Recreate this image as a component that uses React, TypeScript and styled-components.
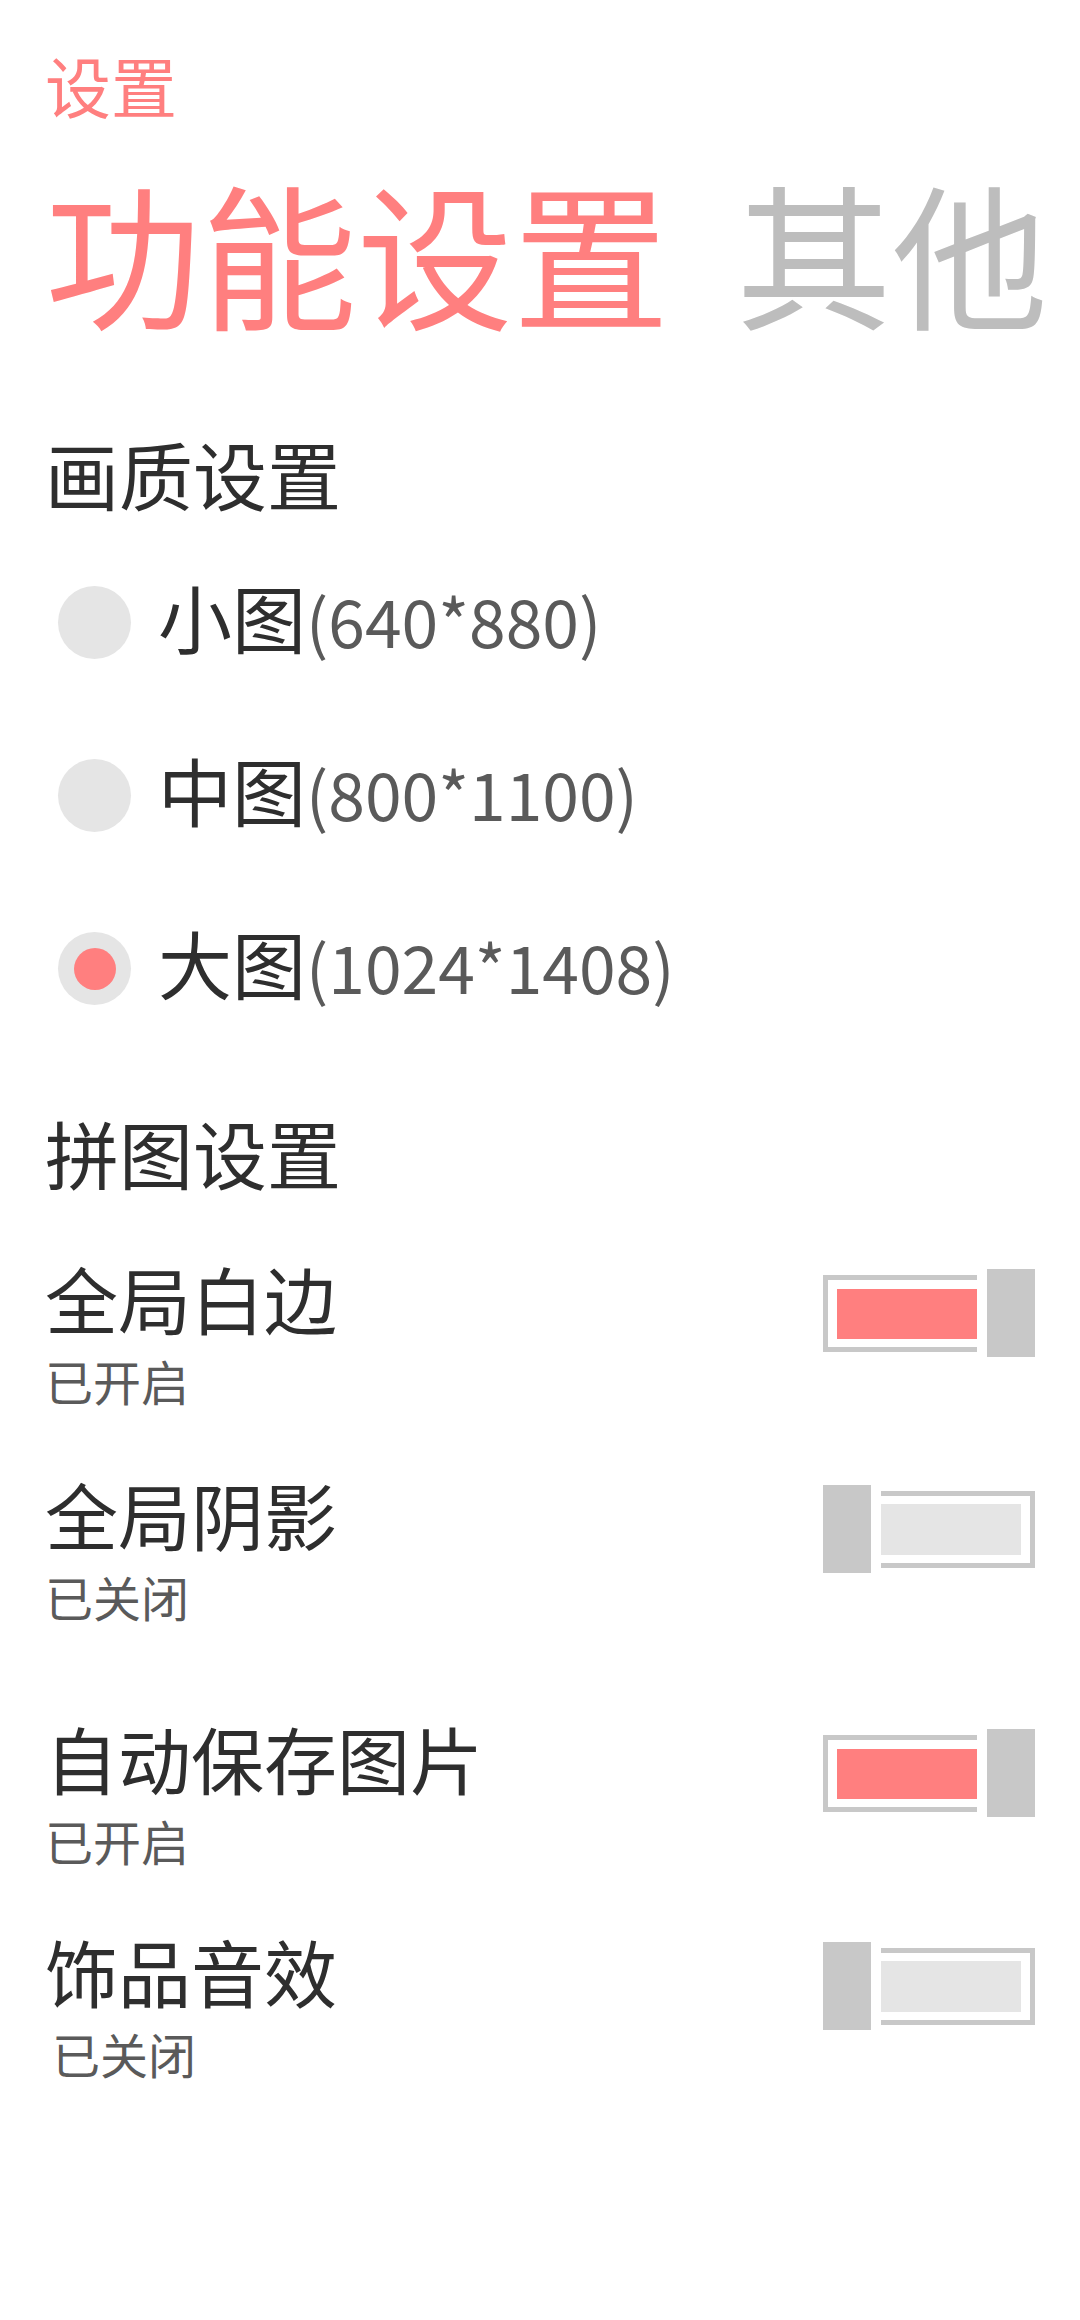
import React from "react";
import styled, { createGlobalStyle } from "styled-components";

const GlobalStyle = createGlobalStyle`
  html, body { margin: 0; padding: 0; background: #ffffff; }
  body { font-family: "Noto Sans CJK SC", "Noto Sans", sans-serif; }
`;

const PINK = "#ff7f7f";
const DARK = "#2e2e2e";
const SUB = "#5a5a5a";
const GRAY = "#c8c8c8";
const LIGHT = "#e5e5e5";

const Page = styled.div`
  width: 1080px;
  min-height: 2320px;
  box-sizing: border-box;
  padding: 51px 45px 0 45px;
  display: flex;
  flex-direction: column;
  background: #fff;
  overflow: hidden;
`;

const SmallTitle = styled.div`
  font-size: 66px;
  line-height: 66px;
  color: ${PINK};
`;

const Tabs = styled.div`
  margin-top: 55px;
  display: flex;
  align-items: baseline;
  white-space: nowrap;
`;

const Tab = styled.div<{ $active?: boolean }>`
  flex-shrink: 0;
  font-size: 156px;
  line-height: 156px;
  color: ${(p) => (p.$active ? PINK : "#bdbdbd")};
  & + & { margin-left: 67px; }
`;

const SectionTitle = styled.div<{ $mt: number }>`
  margin-top: ${(p) => p.$mt}px;
  font-size: 74px;
  line-height: 74px;
  color: ${DARK};
`;

const RadioList = styled.div`
  margin-top: 26px;
  display: flex;
  flex-direction: column;
`;

const RadioRow = styled.div`
  height: 173px;
  display: flex;
  align-items: center;
  padding-left: 13px;
`;

const RadioCircle = styled.div`
  width: 73px;
  height: 73px;
  border-radius: 50%;
  background: ${LIGHT};
  display: flex;
  align-items: center;
  justify-content: center;
  flex-shrink: 0;
`;

const RadioDot = styled.div`
  width: 42px;
  height: 42px;
  border-radius: 50%;
  background: ${PINK};
`;

const RadioLabel = styled.div`
  margin-left: 27px;
  padding-bottom: 10px;
  font-size: 74px;
  line-height: 74px;
  color: ${DARK};
  display: flex;
  align-items: baseline;
  white-space: nowrap;
`;

const Dim = styled.span`
  font-size: 66px;
  color: ${SUB};
`;

const ToggleRow = styled.div<{ $mt: number }>`
  margin-top: ${(p) => p.$mt}px;
  display: flex;
  justify-content: space-between;
  align-items: flex-start;
`;

const RowText = styled.div`
  display: flex;
  flex-direction: column;
`;

const RowTitle = styled.div`
  font-size: 73px;
  line-height: 74px;
  color: ${DARK};
`;

const RowSub = styled.div<{ $indent?: number }>`
  margin-top: 22px;
  margin-left: ${(p) => p.$indent ?? 0}px;
  font-size: 48px;
  line-height: 48px;
  color: ${SUB};
`;

const Toggle = styled.div<{ $on: boolean }>`
  margin-top: 9px;
  display: flex;
  flex-direction: ${(p) => (p.$on ? "row" : "row-reverse")};
  align-items: center;
  gap: 10px;
`;

const Thumb = styled.div`
  width: 48px;
  height: 88px;
  background: ${GRAY};
`;

const Track = styled.div<{ $on: boolean }>`
  width: 154px;
  height: 77px;
  box-sizing: border-box;
  border: 5px solid ${GRAY};
  ${(p) =>
    p.$on
      ? `border-right: none; padding: 9px 0 8px 9px;`
      : `border-left: none; padding: 8px 9px 8px 0;`}
  display: flex;
`;

const Fill = styled.div<{ $on: boolean }>`
  flex: 1;
  background: ${(p) => (p.$on ? PINK : LIGHT)};
`;

const Switch = ({ on }: { on: boolean }) => (
  <Toggle $on={on}>
    <Track $on={on}>
      <Fill $on={on} />
    </Track>
    <Thumb />
  </Toggle>
);

const radios = [
  { name: "小图", size: "(640*880)", checked: false },
  { name: "中图", size: "(800*1100)", checked: false },
  { name: "大图", size: "(1024*1408)", checked: true },
];

const rows = [
  { title: "全局白边", on: true, mt: 71, indent: 0 },
  { title: "全局阴影", on: false, mt: 72, indent: 0 },
  { title: "自动保存图片", on: true, mt: 100, indent: 0 },
  { title: "饰品音效", on: false, mt: 69, indent: 7 },
];

export default function App() {
  return (
    <>
      <GlobalStyle />
      <Page>
        <SmallTitle>设置</SmallTitle>
        <Tabs>
          <Tab $active>功能设置</Tab>
          <Tab>其他</Tab>
        </Tabs>
        <SectionTitle $mt={108}>画质设置</SectionTitle>
        <RadioList>
          {radios.map((r) => (
            <RadioRow key={r.name}>
              <RadioCircle>{r.checked && <RadioDot />}</RadioCircle>
              <RadioLabel>
                {r.name}
                <Dim>{r.size}</Dim>
              </RadioLabel>
            </RadioRow>
          ))}
        </RadioList>
        <SectionTitle $mt={60}>拼图设置</SectionTitle>
        {rows.map((r) => (
          <ToggleRow key={r.title} $mt={r.mt}>
            <RowText>
              <RowTitle>{r.title}</RowTitle>
              <RowSub $indent={r.indent}>{r.on ? "已开启" : "已关闭"}</RowSub>
            </RowText>
            <Switch on={r.on} />
          </ToggleRow>
        ))}
      </Page>
    </>
  );
}
